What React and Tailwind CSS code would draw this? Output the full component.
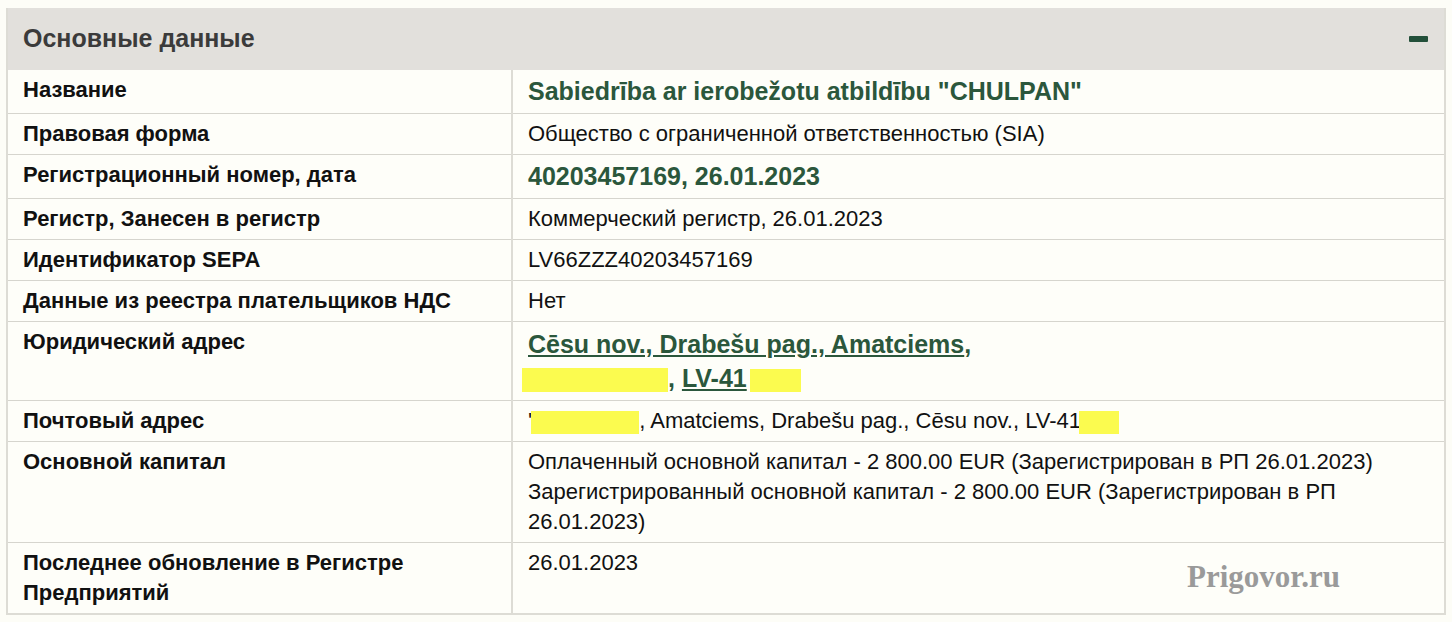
import React from "react";

const rows = [
  { label: "Название", value: <span className="text-[25px] leading-[33px] font-bold text-[#2b573c]">Sabiedrība ar ierobežotu atbildību "CHULPAN"</span> },
  { label: "Правовая форма", value: "Общество с ограниченной ответственностью (SIA)" },
  { label: "Регистрационный номер, дата", value: <span className="text-[25px] leading-[32px] font-bold text-[#2b573c]">40203457169, 26.01.2023</span> },
  { label: "Регистр, Занесен в регистр", value: "Коммерческий регистр, 26.01.2023" },
  { label: "Идентификатор SEPA", value: "LV66ZZZ40203457169" },
  { label: "Данные из реестра плательщиков НДС", value: "Нет" },
  {
    label: "Юридический адрес",
    value: (
      <div className="text-[25px] leading-[34px] font-bold text-[#2b573c]">
        <a href="#" className="underline underline-offset-2">Cēsu nov., Drabešu pag., Amatciems</a>,
        <br />
        <span className="inline-block align-middle w-[146px] h-[24px] bg-[#fbfb4f] -ml-[6px]" />, <a href="#" className="underline underline-offset-2">LV-41</a>
        <span className="inline-block align-middle w-[51px] h-[23px] bg-[#fbfb4f] ml-[3px]" />
      </div>
    ),
  },
  {
    label: "Почтовый адрес",
    value: (
      <span>
        '<span className="inline-block align-middle w-[108px] h-[23px] bg-[#fbfb4f] -ml-[1px]" />, Amatciems, Drabešu pag., Cēsu nov., LV-41
        <span className="inline-block align-middle w-[40px] h-[23px] bg-[#fbfb4f] -ml-[2px]" />
      </span>
    ),
  },
  {
    label: "Основной капитал",
    value: (
      <>
        <div>Оплаченный основной капитал - 2 800.00 EUR (Зарегистрирован в РП 26.01.2023)</div>
        <div>Зарегистрированный основной капитал - 2 800.00 EUR (Зарегистрирован в РП 26.01.2023)</div>
      </>
    ),
  },
  { label: "Последнее обновление в Регистре Предприятий", value: "26.01.2023", watermark: true },
];

export default function App() {
  return (
    <div className="min-h-screen bg-[#fdfdf7] pt-2 px-[6px]" style={{ fontFamily: '"Liberation Sans", Arial, sans-serif' }}>
      <div className="w-[1440px] border-2 border-[#dddcd5] border-t-0">
        {/* Header */}
        <div className="h-[62px] bg-[#e2e0dc] flex items-center justify-between pl-[15px] pr-[16px]">
          <h2 className="text-[25px] font-bold text-[#3b3b3b]">Основные данные</h2>
          <button className="w-[19px] h-[6px] rounded-[1px] bg-[#23503a]" aria-label="Свернуть" />
        </div>

        {/* Table */}
        <table className="w-full border-collapse bg-[#fefef9] text-[22px] leading-[30px] text-[#111]">
          <tbody>
            {rows.map((row, i) => (
              <tr key={i} className={i < rows.length - 1 ? "border-b border-[#d6d5ce]" : ""}>
                <td className="w-[504px] align-top font-bold pl-[15px] pr-[16px] pt-[5px] pb-[5px] border-r-2 border-[#dddcd5]">
                  {row.label}
                </td>
                <td className="align-top pl-[15px] pr-[16px] pt-[5px] pb-[5px] relative">
                  {row.value}
                  {row.watermark && (
                    <span
                      className="absolute right-[104px] top-[19px] text-[31px] font-bold text-[#9a9a9a]"
                      style={{ fontFamily: '"Liberation Serif", "DejaVu Serif", serif' }}
                    >
                      Prigovor.ru
                    </span>
                  )}
                </td>
              </tr>
            ))}
          </tbody>
        </table>
      </div>
    </div>
  );
}
